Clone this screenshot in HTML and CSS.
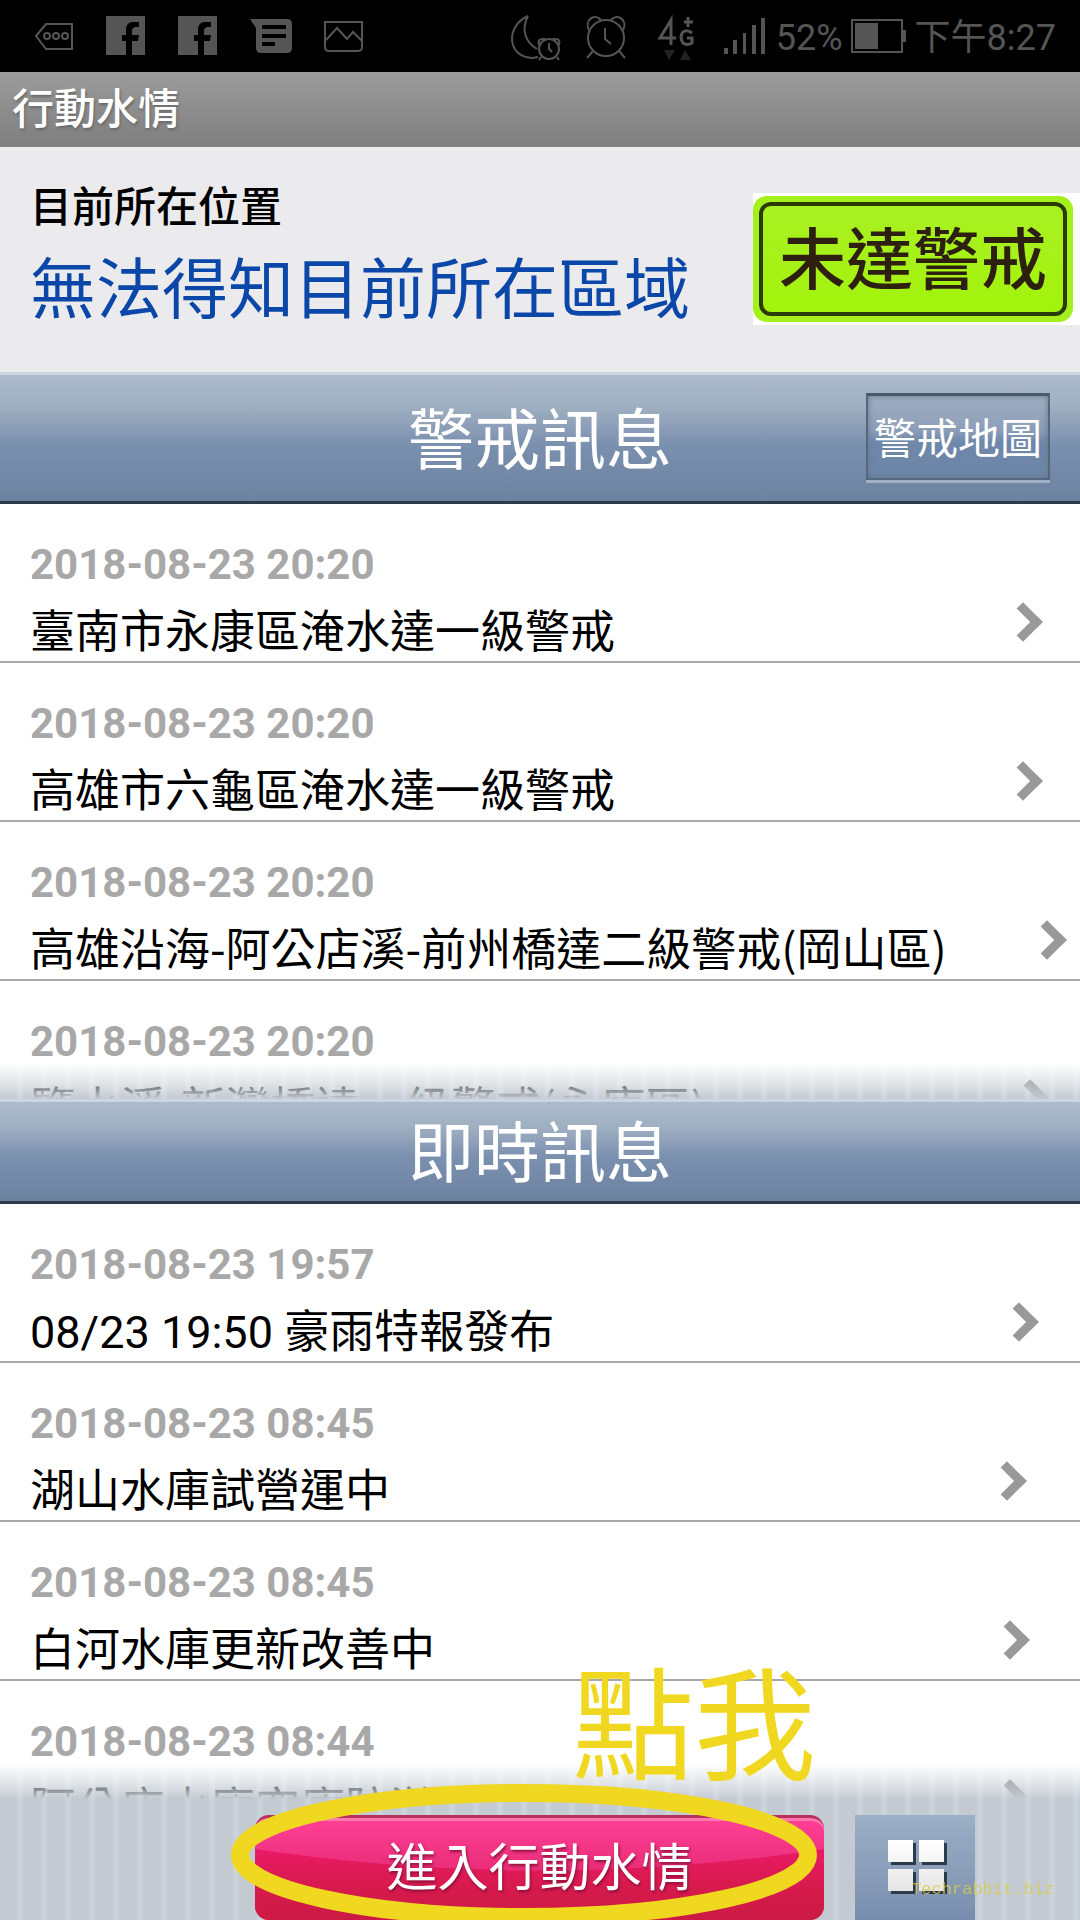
FILE: index.html
```html
<!DOCTYPE html>
<html lang="zh-Hant">
<head>
    <meta charset="UTF-8">
    <meta name="viewport" content="width=device-width, initial-scale=1.0">
    <title>行動水情</title>
    <link rel="stylesheet" href="styles.css">
</head>
<body>

    <div class="status-bar">
        <div class="status-left">
            <svg width="40" height="44" viewBox="0 0 40 44" fill="none" stroke="#555" stroke-width="2">
                <path d="M2 22L12 10H38V35H12Z"/>
                <circle cx="13" cy="22" r="3"/><circle cx="22" cy="22" r="3"/><circle cx="31" cy="22" r="3"/>
            </svg>
            <svg width="40" height="44" viewBox="0 0 40 44" fill="#555">
                <path d="M0 2H39V41H26V27H32L33 21H26V17Q26 13 30 13H33V8H27Q20 8 20 16V21H16V27H20V41H0Z"/>
            </svg>
            <svg width="40" height="44" viewBox="0 0 40 44" fill="#555">
                <path d="M0 2H39V41H26V27H32L33 21H26V17Q26 13 30 13H33V8H27Q20 8 20 16V21H16V27H20V41H0Z"/>
            </svg>
            <svg width="42" height="44" viewBox="0 0 42 44">
                <path fill="#555" d="M0 5H37Q42 5 42 10V34Q42 39 37 39H11Q6 39 6 34V14Z"/>
                <path stroke="#000" stroke-width="4" d="M12 13H36M12 22H36M12 30H25"/>
            </svg>
            <svg width="40" height="44" viewBox="0 0 40 44" fill="none" stroke="#555" stroke-width="2">
                <path d="M1 8H38V33Q38 37 34 37H5Q1 37 1 33ZM2 26L13 14L23 25L29 18L38 27"/>
            </svg>
        </div>
        <div class="status-right">
            <svg class="icon-moon" width="52" height="50" viewBox="0 0 52 50" fill="none" stroke="#555" stroke-width="2">
                <path d="M18 5C-5 15-3 47 23 47L28 46M18 5C11 18 15 31 27 38"/>
                <circle cx="39" cy="38" r="10"/>
                <path d="M29 34Q27 27 35 28M49 34Q51 27 43 28M39 32V38L42 41M31 46L29 49M47 46L49 49"/>
            </svg>
            <svg class="icon-alarm" width="40" height="44" viewBox="0 0 40 44" fill="none" stroke="#555" stroke-width="2">
                <circle cx="20" cy="24" r="18"/>
                <path d="M3 16C-2 7 8-2 15 6M37 16C42 7 32-2 25 6M19 14V25L25 30M7 37L1 44M33 37L39 44"/>
            </svg>
            <svg class="icon-network" width="38" height="48" viewBox="0 0 38 48" fill="none" stroke="#555" stroke-width="3">
                <path d="M13 33V8L2 26H18M26 10H35M30 5V15M34 21Q29 17 25 20Q21 25 25 31Q29 34 34 31V26H29"/>
                <path fill="#222" stroke="none" d="M6 38H17L11 48ZM22 48H33L27 38Z"/>
            </svg>
            <svg class="icon-signal" width="42" height="44" viewBox="0 0 42 44" fill="#555">
                <path d="M0 34H4V40H0ZM9 26H13V40H9ZM19 19H22V40H19ZM28 11H32V40H28ZM37 4H41V40H37Z"/>
            </svg>
            <span>52%</span>
            <svg class="icon-battery" width="56" height="44" viewBox="0 0 56 44">
                <path fill="none" stroke="#555" stroke-width="2" d="M1 6H51V38H1Z"/>
                <path fill="#555" d="M4 9H27V35H4ZM52 16H55V28H52Z"/>
            </svg>
            <span>下午8:27</span>
        </div>
    </div>

    <h1 class="app-title">行動水情</h1>

    <div class="location">
        <div class="location-text">
            <p class="location-label">目前所在位置</p>
            <p class="location-name">無法得知目前所在區域</p>
        </div>
        <div class="alert-box">
            <div class="alert-edge">
                <p class="alert-level">未達警戒</p>
            </div>
        </div>
    </div>

    <div class="section-header">
        <h2>警戒訊息</h2>
        <button type="button" class="map-button">警戒地圖</button>
    </div>
    <div class="list-wrap">
        <ul class="message-list">
            <li><a href="#"><span class="message"><time>2018-08-23 20:20</time><span>臺南市永康區淹水達一級警戒</span></span><span class="arrow"></span></a></li>
            <li><a href="#"><span class="message"><time>2018-08-23 20:20</time><span>高雄市六龜區淹水達一級警戒</span></span><span class="arrow"></span></a></li>
            <li><a href="#"><span class="message"><time>2018-08-23 20:20</time><span>高雄沿海-阿公店溪-前州橋達二級警戒(岡山區)</span></span><span class="arrow"></span></a></li>
            <li><a href="#"><span class="message"><time>2018-08-23 20:20</time><span>鹽水溪-新灣橋達一級警戒(永康區)</span></span><span class="arrow"></span></a></li>
        </ul>
    </div>

    <div class="section-header">
        <h2>即時訊息</h2>
    </div>
    <div class="list-wrap">
        <ul class="message-list">
            <li><a href="#"><span class="message"><time>2018-08-23 19:57</time><span><span class="digits">08/23 19:50 </span>豪雨特報發布</span></span><span class="arrow"></span></a></li>
            <li><a href="#"><span class="message"><time>2018-08-23 08:45</time><span>湖山水庫試營運中</span></span><span class="arrow"></span></a></li>
            <li><a href="#"><span class="message"><time>2018-08-23 08:45</time><span>白河水庫更新改善中</span></span><span class="arrow"></span></a></li>
            <li><a href="#"><span class="message"><time>2018-08-23 08:44</time><span>阿公店水庫空庫防淤</span></span><span class="arrow"></span></a></li>
        </ul>
    </div>

    <div class="footer">
        <button type="button" class="enter-button">
            <svg class="enter-shade" viewBox="0 0 569 105" preserveAspectRatio="none">
                <defs>
                    <linearGradient id="shade" x1="0" y1="0" x2="0" y2="1">
                        <stop offset="0" stop-color="#ea1a66"/>
                        <stop offset="0.5" stop-color="#d81a4e"/>
                        <stop offset="1" stop-color="#cc1a44"/>
                    </linearGradient>
                </defs>
                <path fill="url(#shade)" d="M0 32Q285 76 569 32V105H0Z"/>
            </svg>
            <span>進入行動水情</span>
        </button>
        <button type="button" class="grid-button" aria-label="選單">
            <svg width="62" height="56" viewBox="-3 0 62 56">
                <defs>
                    <linearGradient id="tile" x1="0" y1="0" x2="0" y2="1">
                        <stop offset="0" stop-color="#fff"/>
                        <stop offset="1" stop-color="#e6e6e6"/>
                    </linearGradient>
                </defs>
                <path fill="#2d3a4a" d="M4 4H29V26H4ZM35 4H60V26H35ZM4 33H29V55H4ZM35 33H60V55H35Z"/>
                <path fill="url(#tile)" d="M1 1H26V23H1ZM32 1H57V23H32ZM1 30H26V52H1ZM32 30H57V52H32Z"/>
            </svg>
        </button>

        <!-- annotations drawn over the page -->
        <svg class="note-ring" width="586" height="144" viewBox="0 0 586 144" fill="none">
            <ellipse cx="293" cy="72" rx="284" ry="62" stroke="#f0d820" stroke-width="18"/>
        </svg>
        <p class="note-text">點我</p>
        <p class="watermark">Techrabbit.biz</p>
    </div>

</body>
</html>
```
FILE: styles.css
```css
* {
    box-sizing: border-box;
}
body {
    margin: 0;
    height: 100vh;
    display: flex;
    flex-direction: column;
    overflow: hidden;
    background: #c8cfd6;
    color: #000;
    font-family: Roboto, "Noto Sans CJK TC", sans-serif;
}
h1, h2, p, ul {
    margin: 0;
    padding: 0;
    font-weight: normal;
}
button {
    border: 0;
    padding: 0;
    font-family: inherit;
    color: #fff;
}
svg {
    display: block;
    flex: none;
    overflow: visible;
}

/* status bar */
.status-bar {
    height: 72px;
    flex: none;
    display: flex;
    justify-content: space-between;
    align-items: center;
    padding: 0 24px 0 34px;
    background: #000;
    color: #555;
    font-size: 36px;
    line-height: 40px;
}
.status-left {
    display: flex;
    gap: 32px;
}
.status-right {
    display: flex;
    align-items: center;
}
.status-right span {
    padding-top: 4px;
}
.icon-moon {
    margin-right: 24px;
}
.icon-alarm {
    margin-right: 32px;
}
.icon-network {
    margin-right: 28px;
}
.icon-signal {
    margin-right: 10px;
}
.icon-battery {
    margin: 0 8px;
}

.app-title {
    flex: none;
    height: 75px;
    padding-left: 12px;
    line-height: 76px;
    font-size: 42px;
    font-weight: 500;
    color: #fff;
    text-shadow: 1px 2px 3px #666;
    background: linear-gradient(#9c9c9c, #7e7e7e);
}

/* current location */
.location {
    flex: none;
    display: flex;
    justify-content: space-between;
    align-items: flex-start;
    padding: 30px 0 30px 30px;
    background: #ebebed;
}
.location-label {
    font-size: 42px;
    font-weight: 500;
    line-height: 62px;
}
.location-name {
    font-size: 66px;
    line-height: 103px;
    color: #0a47a8;
}
.alert-box {
    margin-top: 16px;
    padding: 3px 7px 3px 0;
    background: #fff;
}
.alert-edge {
    padding: 6px;
    border-radius: 14px;
    background: #a4f01c;
}
.alert-level {
    padding: 4px 16px 0;
    border: 4px solid #2a3a08;
    border-radius: 12px;
    background: linear-gradient(#a9f023, #a3f30c);
    color: #2e2010;
    font-size: 67px;
    font-weight: 500;
    line-height: 102px;
}

/* blue headers */
.section-header {
    flex: none;
    min-height: 105px;
    display: grid;
    grid-template-columns: 1fr auto 1fr;
    align-items: center;
    border-top: 3px solid #ccd6e1;
    border-bottom: 3px solid #2e3a49;
    background: linear-gradient(#adbacc, #9fb0c1 25%, #8c9db8 42%, #7990ae 56%, #6d829f);
}
.section-header h2 {
    grid-column: 2;
    padding-top: 7px;
    color: #fff;
    font-size: 66px;
    line-height: 92px;
}
.map-button {
    justify-self: end;
    margin: 18px 30px 21px;
    padding: 6px 6px 0;
    border: 2px solid #55677a;
    border-top: 3px solid #4b5a6a;
    box-shadow: 0 3px 0 #9fb0c6, inset 0 0 6px #64788f;
    background: linear-gradient(#9fb0c1, #8c9db8 42%, #6f88aa 56%, #6d85a6);
    font-size: 42px;
    line-height: 76px;
}

/* message lists */
.list-wrap {
    flex: 1;
    min-height: 0;
    position: relative;
    overflow: hidden;
    background: #fff;
}
.list-wrap::after {
    content: "";
    position: absolute;
    left: 0;
    right: 0;
    bottom: 0;
    height: 36px;
    -webkit-mask-image: linear-gradient(transparent, rgba(0, 0, 0, 0.5) 55%, #000);
    mask-image: linear-gradient(transparent, rgba(0, 0, 0, 0.5) 55%, #000);
}
.list-wrap::after, .footer {
    background: repeating-linear-gradient(90deg, #c3cad1 0, #c3cad1 16px, #cbd3db 18px, #cbd3db 22px, #c3cad1 24px);
}
.message-list {
    list-style: none;
}
.message-list a {
    display: flex;
    align-items: center;
    padding: 33px 0 4px 30px;
    border-bottom: 2px solid #a8a8a8;
    color: #000;
    text-decoration: none;
}
.message {
    flex: 6 0 auto;
    display: flex;
    flex-direction: column;
    gap: 8px;
    font-family: "Noto Sans CJK TC", sans-serif;
    font-size: 45px;
    line-height: 56px;
}
.message time, .digits {
    font-family: Roboto, sans-serif;
}
.message time {
    color: #a8a8a8;
    font-size: 42px;
    font-weight: bold;
}
.digits {
    line-height: 1;
}
.arrow {
    flex: 1 0 41px;
    display: flex;
    justify-content: center;
    padding-top: 50px;
}
.arrow::before {
    content: "";
    box-sizing: border-box;
    width: 28px;
    height: 28px;
    border: solid #999;
    border-width: 9px 9px 0 0;
    transform: translateX(-6px) rotate(45deg);
}

/* bottom buttons */
.footer {
    flex: none;
    height: 121px;
    position: relative;
    display: flex;
    justify-content: center;
    gap: 31px;
    padding: 16px 0 0 150px;
}
.enter-button {
    width: 569px;
    height: 105px;
    position: relative;
    overflow: hidden;
    border-top: 3px solid #b8305c;
    border-radius: 14px;
    box-shadow: inset 0 3px 0 #ff78b0;
    background: linear-gradient(#ff4096, #e62a74 60%);
    font-size: 51px;
    line-height: 96px;
    text-shadow: 1px 2px 3px #8a1038;
}
.enter-button span {
    position: relative;
}
.enter-shade {
    position: absolute;
    left: 0;
    top: 0;
    width: 100%;
    height: 100%;
}
.grid-button {
    width: 120px;
    height: 105px;
    display: flex;
    justify-content: center;
    padding-top: 24px;
    background: linear-gradient(#9bafc6, #8c9fba 50%, #788dae);
}
.note-ring {
    position: absolute;
    left: 231px;
    top: -16px;
}
.note-text {
    position: absolute;
    left: 572px;
    bottom: 119px;
    color: #f0d820;
    font-size: 122px;
    line-height: 144px;
}
.watermark {
    position: absolute;
    right: 26px;
    bottom: 20px;
    color: #d8cc50;
    font-family: "Liberation Mono", monospace;
    font-size: 17px;
    line-height: 20px;
    opacity: 0.8;
}
```
